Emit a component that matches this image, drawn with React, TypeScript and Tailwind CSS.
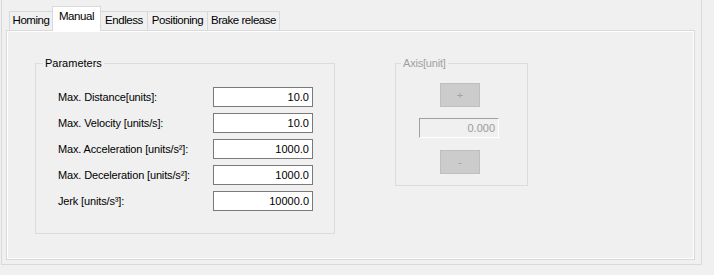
import React from 'react';

interface Param {
  label: React.ReactNode;
  value: string;
}

const tabs = [
  { name: 'Homing', width: 'w-[44px]' },
  { name: 'Manual', width: 'w-[49px]', active: true },
  { name: 'Endless', width: 'w-[48px]' },
  { name: 'Positioning', width: 'w-[61px]' },
  { name: 'Brake release', width: 'w-[73px]' },
];

const params: Param[] = [
  { label: 'Max. Distance[units]:', value: '10.0' },
  { label: 'Max. Velocity [units/s]:', value: '10.0' },
  { label: 'Max. Acceleration [units/s²]:', value: '1000.0' },
  { label: 'Max. Deceleration [units/s²]:', value: '1000.0' },
  { label: 'Jerk [units/s³]:', value: '10000.0' },
];

const App: React.FC = () => {
  return (
    <div className="w-[714px] h-[275px] bg-[#f0f0f0] pl-[1px] text-[11px] text-black font-['Liberation_Sans',Arial,sans-serif]">
      <div className="w-[701px] h-[265px] border-l border-r border-b border-[#d9d9d9] pl-[4px]">
        {/* tab strip */}
        <div className="flex pt-[6px] pl-[3px] h-[31px] text-[11.5px] tracking-[-0.45px]">
          {tabs.map((t, i) =>
            t.active ? (
              <div
                key={t.name}
                className={`${t.width} h-[25px] relative z-10 -ml-px bg-white border-l border-t border-r border-[#d9d9d9] flex justify-center pt-[1px]`}
              >
                {t.name}
              </div>
            ) : (
              <div
                key={t.name}
                className={`${t.width} h-[19px] mt-[5px] ${i > 0 ? '-ml-px' : ''} bg-[#f0f0f0] border-l border-t border-r border-[#d9d9d9] flex justify-center pt-0`}
              >
                {t.name}
              </div>
            )
          )}
        </div>

        {/* tab page */}
        <div className="w-[689px] h-[230px] -mt-px border border-[#d9d9d9] shadow-[inset_1px_1px_0_#fff,inset_-1px_-1px_0_#fff] pl-[28px] pt-[26px] flex items-start">
          <fieldset className="w-[300px] border border-[#dcdcdc] rounded-none">
            <legend className="ml-[7px] px-[2px] leading-[13px]">Parameters</legend>
            <div className="pt-[17px] pb-[22px] pl-[22px] pr-[21px] flex flex-col gap-[6px] tracking-[-0.15px]">
              {params.map((p, i) => (
                <div key={i} className="flex items-center h-[20px]">
                  <div className="w-[155px]">{p.label}</div>
                  <div className="w-[100px] h-[20px] bg-white border border-[#7a7a7a] flex items-center justify-end pr-[3px] tracking-normal">
                    {p.value}
                  </div>
                </div>
              ))}
            </div>
          </fieldset>

          <fieldset className="ml-[60px] w-[133px] border border-[#dcdcdc] rounded-none">
            <legend className="ml-[5px] px-[2px] leading-[13px] text-[#a0a0a0] tracking-[-0.2px]">Axis[unit]</legend>
            <div className="pt-[13px] pb-[11px] flex flex-col">
              <button className="ml-[44px] w-[40px] h-[24px] bg-[#cccccc] border border-[#bfbfbf] text-[#a3a3a3] leading-none">
                +
              </button>
              <div className="ml-[23px] mt-[11px] w-[80px] h-[20px] bg-[#f0f0f0] border-t border-l border-[#a0a0a0] border-r border-b border-r-white border-b-white flex items-center justify-end pr-[3px] text-[#9a9a9a]">
                0.000
              </div>
              <button className="ml-[44px] mt-[12px] w-[40px] h-[24px] bg-[#cccccc] border border-[#bfbfbf] text-[#a3a3a3] leading-none">
                -
              </button>
            </div>
          </fieldset>
        </div>
      </div>
    </div>
  );
};

export default App;
